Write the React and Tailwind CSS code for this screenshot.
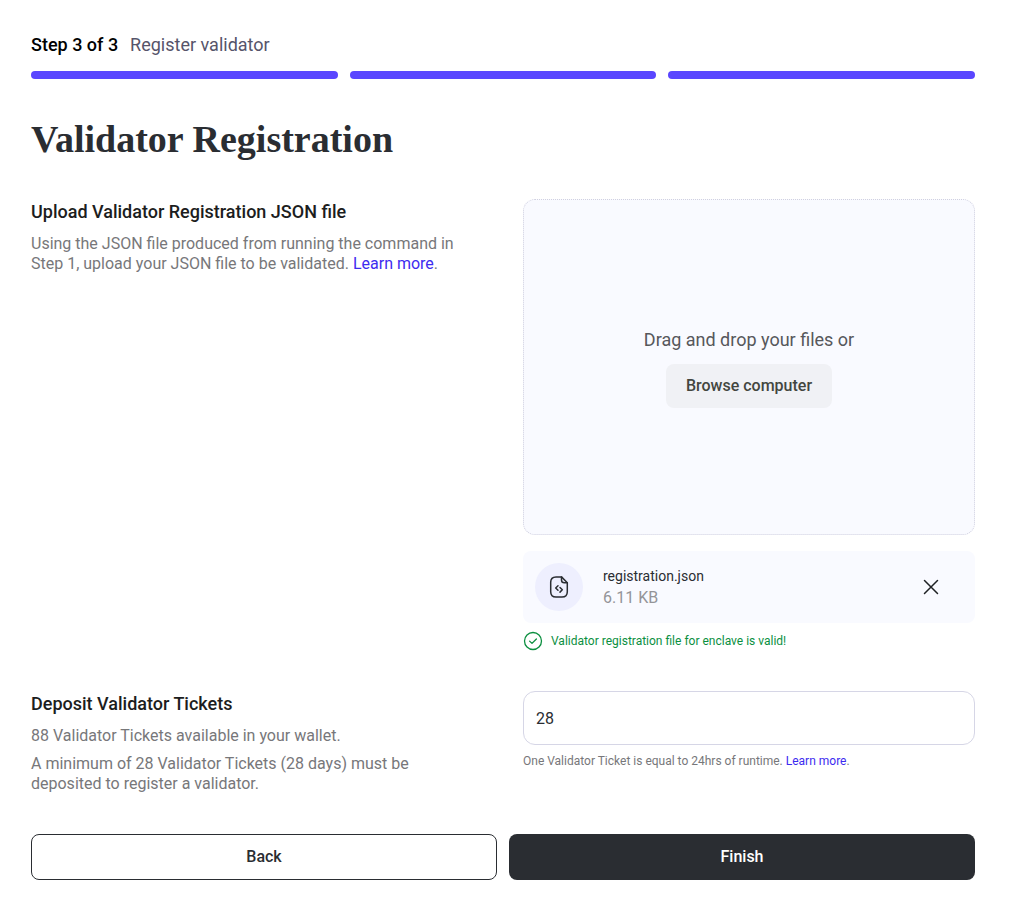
import { useState } from "react";

function Steps({ current, total, label }) {
  return (
    <header className="flex flex-col gap-3">
      <p className="flex gap-3 text-lg leading-7">
        <span className="font-medium text-black">
          Step {current} of {total}
        </span>
        <span className="text-[#56546a]">{label}</span>
      </p>
      <div className="flex gap-3">
        {Array.from({ length: total }, (_, i) => (
          <div key={i} className="h-2 flex-1 rounded-full bg-[#5a46ff]" />
        ))}
      </div>
    </header>
  );
}

function Section({ title, description, children }) {
  return (
    <section className="grid grid-cols-2 gap-10">
      <div>
        <h2 className="mb-[9px] text-lg leading-[26px] font-medium text-[#1c1d20]">{title}</h2>
        <div className="flex flex-col gap-2 text-[#77777a]">{description}</div>
      </div>
      <div className="flex flex-col">{children}</div>
    </section>
  );
}

function LearnMore() {
  return (
    <a href="#learn-more" className="text-[#3d2bf0]">
      Learn more
    </a>
  );
}

function FileCodeIcon() {
  return (
    <svg width="24" height="24" viewBox="0 0 24 24" fill="none" stroke="#2a2d32" strokeWidth="1.5" strokeLinecap="round" strokeLinejoin="round" aria-hidden="true">
      <path d="M14.500 1.900H9C5.200 1.900 3.700 3.400 3.700 7.200V16.700C3.700 20.500 5.200 22 9 22H15C18.800 22 20.300 20.500 20.300 16.700V7.700L14.500 1.900Z" />
      <path d="M14.500 2V4.900C14.500 6.900 15.300 7.700 17.300 7.700H20.200" />
      <path d="M11 10.700L8.700 13L11 15.300" />
      <path d="M13 12.500L15.300 14.800L13 17.100" />
    </svg>
  );
}

function CloseIcon() {
  return (
    <svg width="24" height="24" viewBox="0 0 24 24" fill="none" stroke="#1f2124" strokeWidth="1.5" strokeLinecap="round" aria-hidden="true">
      <path d="M5.500 5.500L18.500 18.500M18.500 5.500L5.500 18.500" />
    </svg>
  );
}

function CheckIcon() {
  return (
    <svg width="20" height="20" viewBox="0 0 20 20" fill="none" stroke="#0b8f3f" strokeWidth="1.3" strokeLinecap="round" strokeLinejoin="round" aria-hidden="true">
      <circle cx="10" cy="10" r="8.500" />
      <path d="M6.600 10.100L9 12.400L13.400 8" />
    </svg>
  );
}

export default function App() {
  const [tickets, setTickets] = useState("28");
  const [file, setFile] = useState({ name: "registration.json", size: "6.11 KB" });

  return (
    <main className="bg-white pt-[31px] pr-[35px] pb-8 pl-[31px] font-[Roboto,sans-serif] text-base leading-5">
      <Steps current={3} total={3} label="Register validator" />

      <h1 className="mt-9 font-['Liberation_Serif',serif] text-[38px] leading-12 font-bold text-[#2a2d32]">
        Validator Registration
      </h1>

      <form className="mt-9 flex flex-col gap-10" onSubmit={(e) => e.preventDefault()}>
        <Section
          title="Upload Validator Registration JSON file"
          description={
            <p>
              Using the JSON file produced from running the command in Step 1, upload your JSON file
              to be validated. <LearnMore />.
            </p>
          }
        >
          <div className="flex h-[336px] flex-col items-center justify-center gap-2.5 rounded-xl border border-dotted border-[#d0d0e0] bg-[#f9faff]">
            <p className="text-lg leading-7 text-[#56575b]">Drag and drop your files or</p>
            <button type="button" className="h-11 rounded-lg bg-[#f0f1f5] px-5 font-medium text-[#43463f]">
              Browse computer
            </button>
          </div>
          {file && (
            <>
              <div className="mt-4 flex h-[72px] items-center gap-5 rounded-lg bg-[#f9faff] pr-8 pl-3">
                <span className="flex size-12 items-center justify-center rounded-full bg-[#eeeffe]">
                  <FileCodeIcon />
                </span>
                <div className="flex flex-1 flex-col gap-0.5">
                  <p className="text-sm leading-5 text-[#2a2d32]">{file.name}</p>
                  <p className="text-[#949498]">{file.size}</p>
                </div>
                <button type="button" aria-label="Remove file" onClick={() => setFile(null)}>
                  <CloseIcon />
                </button>
              </div>
              <p className="mt-2 flex items-center gap-2 text-xs leading-5 text-[#0b8f3f]">
                <CheckIcon />
                Validator registration file for enclave is valid!
              </p>
            </>
          )}
        </Section>

        <Section
          title={<label htmlFor="tickets">Deposit Validator Tickets</label>}
          description={
            <>
              <p>88 Validator Tickets available in your wallet.</p>
              <p>
                A minimum of 28 Validator Tickets (28 days) must be deposited to register a
                validator.
              </p>
            </>
          }
        >
          <input
            id="tickets"
            type="text"
            inputMode="numeric"
            value={tickets}
            onChange={(e) => setTickets(e.target.value)}
            className="h-[54px] w-full rounded-xl border border-[#d6d6e6] bg-white px-3 text-[#2a2d32]"
          />
          <p className="mt-1.5 text-xs leading-5 text-[#77777a]">
            One Validator Ticket is equal to 24hrs of runtime. <LearnMore />.
          </p>
        </Section>

        <div className="grid grid-cols-2 gap-3">
          <button type="button" className="h-[46px] rounded-lg border border-[#2a2d32] bg-white font-medium text-[#2a2d32]">
            Back
          </button>
          <button type="submit" className="h-[46px] rounded-lg bg-[#2a2d32] font-medium text-white">
            Finish
          </button>
        </div>
      </form>
    </main>
  );
}
